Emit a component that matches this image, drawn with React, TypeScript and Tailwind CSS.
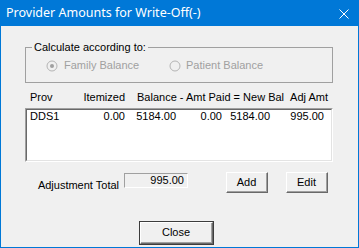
import React from 'react';

function Radio({ checked }: { checked?: boolean }) {
  return (
    <svg width="12" height="12" viewBox="0 0 12 12" className="shrink-0">
      <circle cx="6" cy="6" r="5" fill="#f0f0f0" stroke="#b4b4b4" strokeWidth="1" />
      {checked && <circle cx="6" cy="6" r="2" fill="#a0a0a0" />}
    </svg>
  );
}

function Button({ label, isDefault, className }: { label: string; isDefault?: boolean; className?: string }) {
  return (
    <button
      className={`${className ?? ''} ${isDefault ? 'border border-[#3c3c3c]' : ''} bg-[#f0f0f0] p-0 text-[11px] leading-none text-black`}
    >
      <span className="flex h-full w-full border-t border-l border-t-white border-l-white border-r border-b border-r-[#696969] border-b-[#696969]">
        <span className="flex flex-1 items-center justify-center border-r border-b border-r-[#a0a0a0] border-b-[#a0a0a0]">
          {label}
        </span>
      </span>
    </button>
  );
}

export default function App() {
  return (
    <div className="w-[359px] h-[248px] border border-[#0078d7] bg-[#f0f0f0] flex flex-col font-['Liberation_Sans',Arial,sans-serif] text-[11px] text-black">
      {/* Title bar */}
      <div className="h-[25px] shrink-0 bg-[#0078d7] flex items-center justify-between pl-[5px] pr-[9px] text-white text-[12.5px] font-['Noto_Sans',sans-serif]">
        <span className="leading-none">Provider Amounts for Write-Off(-)</span>
        <svg width="10" height="10" viewBox="0 0 10 10">
          <path d="M0.5 0.5 L9.5 9.5 M9.5 0.5 L0.5 9.5" stroke="#ffffff" strokeWidth="1" />
        </svg>
      </div>

      <div className="flex flex-col pt-[15px] pl-[24px]">
        {/* Group box */}
        <fieldset className="w-[308px] h-[42px] border border-[#a0a0a0] pl-[6px]">
          <legend className="px-[2px] leading-[13px]">Calculate according to:</legend>
          <div className="flex items-center mt-[5px] h-[13px] text-[#a0a0a0]">
            <div className="flex items-center ml-[14px] w-[123px]">
              <Radio checked />
              <span className="ml-[6px] leading-[13px]">Family Balance</span>
            </div>
            <div className="flex items-center">
              <Radio />
              <span className="ml-[5px] leading-[13px]">Patient Balance</span>
            </div>
          </div>
        </fieldset>

        {/* Column headers */}
        <div className="flex mt-[8px] h-[13px] leading-[13px] whitespace-nowrap">
          <span className="w-[55px] pl-[5px]">Prov</span>
          <span className="w-[45px] text-right">Itemized</span>
          <span className="w-[161px] pl-[12px]">Balance - Amt Paid = New Bal</span>
          <span className="w-[42px] text-right">Adj Amt</span>
        </div>

        {/* List box */}
        <div className="mt-[4px] w-[308px] h-[54px] border border-t-[#a0a0a0] border-l-[#a0a0a0] border-r-white border-b-white">
          <div className="h-full bg-white border border-t-[#696969] border-l-[#696969] border-r-[#e3e3e3] border-b-[#e3e3e3]">
            <div className="flex h-[13px] leading-[13px] whitespace-nowrap">
              <span className="w-[53px] pl-[3px]">DDS1</span>
              <span className="w-[45px] text-right">0.00</span>
              <span className="w-[51px] text-right">5184.00</span>
              <span className="w-[46px] text-right">0.00</span>
              <span className="w-[48px] text-right">5184.00</span>
              <span className="w-[54px] text-right">995.00</span>
            </div>
          </div>
        </div>

        {/* Adjustment total row */}
        <div className="flex items-start mt-[10px] h-[21px]">
          <span className="w-[94px] text-right mt-[7px] leading-[13px] whitespace-nowrap">Adjustment Total</span>
          <div className="ml-[5px] mt-[1px] w-[64px] h-[15px] border border-t-[#a0a0a0] border-l-[#a0a0a0] border-r-white border-b-white flex items-center justify-end pr-[3px] leading-[13px]">
            995.00
          </div>
          <Button label="Add" className="ml-[38px] w-[42px] h-[21px]" />
          <Button label="Edit" className="ml-[18px] w-[42px] h-[21px]" />
        </div>

        {/* Close */}
        <Button label="Close" isDefault className="mt-[28px] ml-[114px] w-[75px] h-[24px]" />
      </div>
    </div>
  );
}
